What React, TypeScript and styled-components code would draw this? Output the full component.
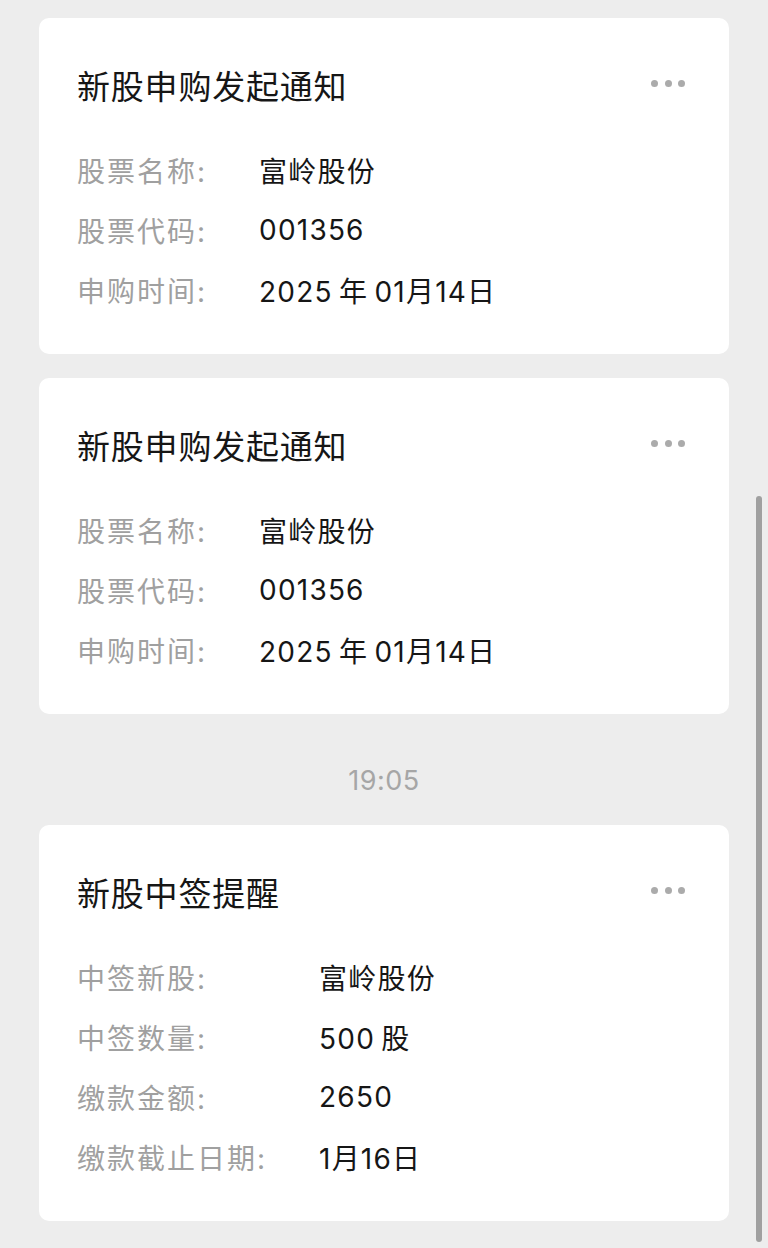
import styled, { createGlobalStyle } from 'styled-components';

const GlobalStyle = createGlobalStyle`
  html, body {
    margin: 0;
    padding: 0;
    background: #ededed;
  }
  body {
    font-family: Inter, "Noto Sans CJK SC", sans-serif;
    -webkit-font-smoothing: antialiased;
  }
`;

const Page = styled.div`
  position: relative;
  min-height: 1248px;
  padding: 18px 39px 0;
  box-sizing: border-box;
  display: flex;
  flex-direction: column;
  overflow: hidden;
`;

const Card = styled.section`
  background: #ffffff;
  border-radius: 10px;
  padding: 49px 44px 34px 38px;
  display: flex;
  flex-direction: column;
  & + & {
    margin-top: 24px;
  }
`;

const CardHeader = styled.div`
  display: flex;
  align-items: center;
  justify-content: space-between;
  margin-bottom: 33px;
`;

const Title = styled.h2`
  margin: 0;
  font-size: 33px;
  line-height: 40px;
  font-weight: 400;
  color: #161616;
  letter-spacing: 0.8px;
`;

const More = styled.button`
  border: 0;
  background: none;
  padding: 0;
  margin-bottom: 8px;
  display: flex;
  gap: 6.5px;
  cursor: pointer;
`;

const Dot = styled.span`
  width: 7px;
  height: 7px;
  border-radius: 50%;
  background: #ababab;
`;

const Fields = styled.dl`
  margin: 0;
  display: grid;
  grid-template-columns: auto 1fr;
  column-gap: 52px;
  grid-auto-rows: 60px;
  align-items: center;
`;

const Label = styled.dt`
  font-size: 28px;
  color: #a0a0a0;
  letter-spacing: 2px;
`;

const Value = styled.dd`
  margin: 0;
  font-size: 28px;
  color: #161616;
  letter-spacing: 1.2px;
`;

const TimeStamp = styled.div`
  margin: 52px 0 29px;
  text-align: center;
  font-size: 27px;
  line-height: 30px;
  color: #a6a6a6;
  letter-spacing: 0.5px;
`;

const ScrollThumb = styled.div`
  position: absolute;
  right: 6px;
  top: 496px;
  width: 6px;
  height: 746px;
  border-radius: 3px;
  background: #a0a0a0;
`;

type Field = [string, string];

function NoticeCard({ title, fields }: { title: string; fields: Field[] }) {
  return (
    <Card>
      <CardHeader>
        <Title>{title}</Title>
        <More aria-label='更多'>
          <Dot />
          <Dot />
          <Dot />
        </More>
      </CardHeader>
      <Fields>
        {fields.map(([k, v]) => (
          <>
            <Label key={k}>{k}</Label>
            <Value key={k + 'v'}>{v}</Value>
          </>
        ))}
      </Fields>
    </Card>
  );
}

const subscribe: Field[] = [
  ['股票名称:', '富岭股份'],
  ['股票代码:', '001356'],
  ['申购时间:', '2025\u2009年\u200901月14日'],
];

const allotted: Field[] = [
  ['中签新股:', '富岭股份'],
  ['中签数量:', '500\u2009股'],
  ['缴款金额:', '2650'],
  ['缴款截止日期:', '1月16日'],
];

export default function App() {
  return (
    <>
      <GlobalStyle />
      <Page>
        <NoticeCard title='新股申购发起通知' fields={subscribe} />
        <NoticeCard title='新股申购发起通知' fields={subscribe} />
        <TimeStamp>19:05</TimeStamp>
        <NoticeCard title='新股中签提醒' fields={allotted} />
        <ScrollThumb />
      </Page>
    </>
  );
}
